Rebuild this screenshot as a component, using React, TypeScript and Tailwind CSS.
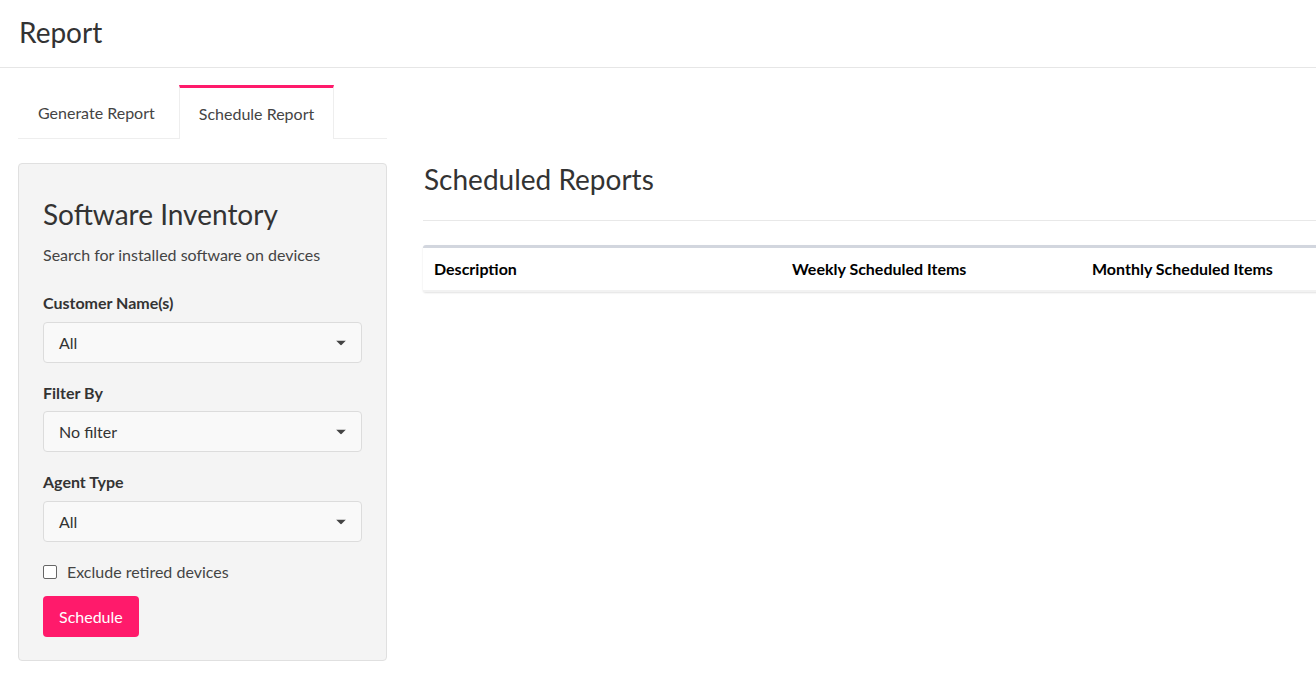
import React from "react";

const font = { fontFamily: "Lato, 'Noto Sans', sans-serif" };

function Caret() {
  return (
    <svg width="10" height="5" viewBox="0 0 10 5" className="absolute right-[15px] top-1/2 -translate-y-1/2">
      <path d="M0 0 L10 0 L5 5 Z" fill="#444" />
    </svg>
  );
}

function Select({ value }: { value: string }) {
  return (
    <div className="relative h-[41px] w-full rounded-[4px] border border-[#dcdcdc] bg-[#f9f9f9] pl-[15px] flex items-center text-[16px] text-[#333]">
      {value}
      <Caret />
    </div>
  );
}

export default function App() {
  return (
    <div className="w-full h-screen overflow-hidden bg-white text-[#333]" style={font}>
      <div className="h-[68px] border-b border-[#e6e6e6] flex items-center pl-[19px] pb-[4px]">
        <h1 className="text-[28px] leading-[34px] text-[#333] font-normal">Report</h1>
      </div>
      <div className="flex pl-[18px] gap-[36px] pt-[17px]">
        <div className="w-[369px] shrink-0">
          <div className="flex border-b border-[#eeeeee] h-[54px]">
            <div className="w-[161px] pl-[20px] pt-[3px] flex items-center text-[16px] text-[#444]">Generate Report</div>
            <div className="w-[155px] border-t-[3px] border-t-[#ff1a6b] border-x border-x-[#eeeeee] bg-white -mb-px flex items-center justify-center text-[16px] text-[#444]">
              Schedule Report
            </div>
          </div>
          <div className="mt-[24px] rounded-[4px] border border-[#e0e0e0] bg-[#f4f4f4] px-[24px] pt-[33px] pb-[23px]">
            <h2 className="text-[28px] leading-[34px] text-[#333]">Software Inventory</h2>
            <p className="mt-[12px] text-[16px] leading-[24px] text-[#444]">Search for installed software on devices</p>
            <div className="mt-[24px] text-[16px] leading-[24px] font-bold text-[#333]">Customer Name(s)</div>
            <div className="mt-[7px]"><Select value="All" /></div>
            <div className="mt-[18px] text-[16px] leading-[24px] font-bold text-[#333]">Filter By</div>
            <div className="mt-[6px]"><Select value="No filter" /></div>
            <div className="mt-[18px] text-[16px] leading-[24px] font-bold text-[#333]">Agent Type</div>
            <div className="mt-[7px]"><Select value="All" /></div>
            <div className="mt-[18px] flex items-center h-[24px] gap-[10px]">
              <span className="w-[14px] h-[14px] rounded-[2px] border border-[#666] bg-white" />
              <span className="text-[16px] text-[#444]">Exclude retired devices</span>
            </div>
            <button className="mt-[12px] h-[41px] px-[16px] rounded-[4px] bg-[#ff1a6b] text-white text-[16px]">Schedule</button>
          </div>
        </div>
        <div className="min-w-[1000px] flex-1 pt-[77px]">
          <h2 className="text-[28px] leading-[34px] font-normal text-[#333] pl-px">Scheduled Reports</h2>
          <div className="mt-[24px] border-t border-[#e8e8e8]" />
          <div className="mt-[24px] rounded-[3px] border-t-[3px] border-[#d2d6de] bg-white shadow-[0_1px_2px_rgba(0,0,0,0.12)]">
            <div className="flex h-[44px] items-center border-b-2 border-[#f2f2f2] text-[16px] font-bold text-black">
              <div className="w-[358px] pl-[11px]">Description</div>
              <div className="w-[300px] pl-[11px]">Weekly Scheduled Items</div>
              <div className="w-[300px] pl-[11px]">Monthly Scheduled Items</div>
            </div>
          </div>
        </div>
      </div>
    </div>
  );
}
